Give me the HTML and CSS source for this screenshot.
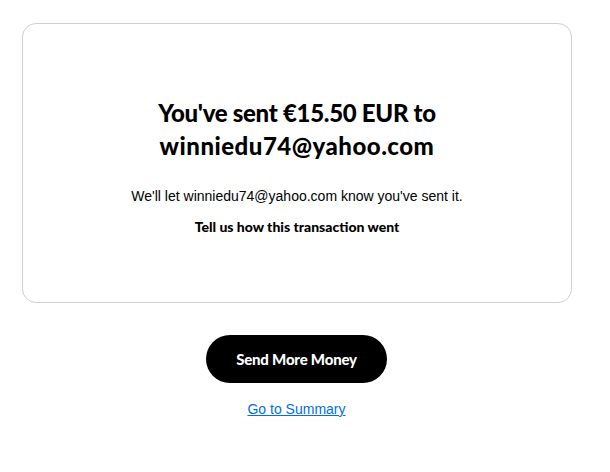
FILE: index.html
```html
<!DOCTYPE html>
<html lang="en">
<head>
<meta charset="utf-8">
<title>Sent</title>
<link rel="stylesheet" href="styles.css">
</head>
<body>
<main class="page">
  <section class="card">
    <h1 class="title">You've sent €15.50 EUR to<br><span class="recipient">winniedu74@yahoo.com</span></h1>
    <p class="note">We'll let winniedu74@yahoo.com know you've sent it.</p>
    <p class="feedback">Tell us how this transaction went</p>
  </section>
  <div class="actions">
    <button class="primary" type="button">Send More Money</button>
    <a class="link" href="#">Go to Summary</a>
  </div>
</main>
</body>
</html>
```

FILE: styles.css
```css
html, body {
  margin: 0;
  padding: 0;
  background: #fff;
}
body {
  font-family: "Liberation Sans", Arial, sans-serif;
  color: #000;
}
.page {
  padding: 23px 39px 0 22px;
}
.card {
  box-sizing: border-box;
  width: 550px;
  height: 280px;
  border: 1px solid #cfcfcf;
  border-radius: 14px;
  display: flex;
  flex-direction: column;
  align-items: center;
  padding-top: 72px;
  text-align: center;
}
.title {
  margin: 0;
  font-family: Lato, sans-serif;
  font-weight: 900;
  font-size: 24px;
  line-height: 33px;
  letter-spacing: -0.3px;
}
.recipient {
  letter-spacing: 0.5px;
}
.note {
  margin: 24px 0 0;
  font-size: 14px;
  line-height: 20px;
}
.feedback {
  margin: 11px 0 0;
  font-family: Lato, sans-serif;
  font-weight: 900;
  font-size: 14px;
  line-height: 20px;
}
.actions {
  display: flex;
  flex-direction: column;
  align-items: center;
  padding-top: 32px;
}
.primary {
  width: 181px;
  height: 48px;
  border: 0;
  border-radius: 24px;
  background: #000;
  color: #fff;
  font-family: Lato, sans-serif;
  font-weight: 900;
  font-size: 15px;
  letter-spacing: -0.2px;
  cursor: pointer;
}
.link {
  margin-top: 17px;
  color: #0070e0;
  font-size: 14px;
  line-height: 18px;
  text-decoration: underline;
}
```
